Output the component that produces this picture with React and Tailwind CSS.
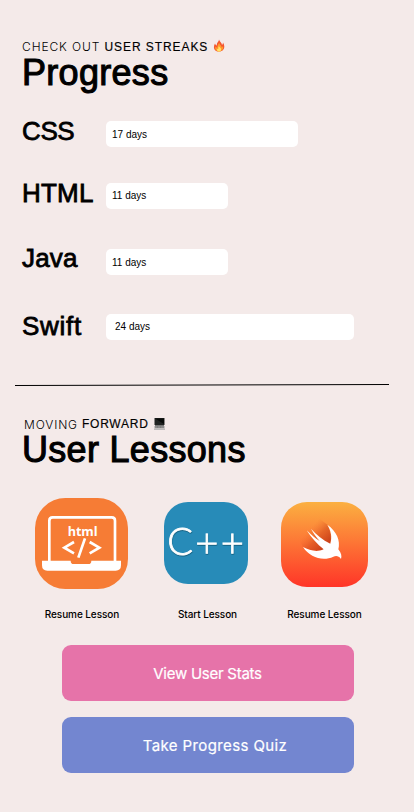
const helvetica = "font-['Liberation_Sans',Arial,sans-serif]";
const inter = "font-['Inter',sans-serif]";

const streaks = [
  { name: 'CSS', days: '17 days', row: 'h-[62px]', label: 'tracking-[-0.4px]', bar: 'w-[192px] pl-1.5 pt-px' },
  { name: 'HTML', days: '11 days', row: 'h-[66px]', label: 'tracking-[0.2px]', bar: 'w-[122px] pl-1.5 pb-0.5' },
  { name: 'Java', days: '11 days', row: 'h-[65px]', label: '-mt-px tracking-[0.2px]', bar: 'w-[122px] pl-1.5 pt-px' },
  { name: 'Swift', days: '24 days', row: 'h-[70px]', label: 'mt-0.5 tracking-[0.7px]', bar: 'w-[248px] pl-[9px] pb-px' },
];

function Flame() {
  return (
    <svg className="-mt-[3px] h-[13px] w-3" viewBox="0 0 24 26">
      <path d="M12 1C13 6 18 7 18 12Q20 10 20 7C25 14 23 25 12 25S0 15 4 9Q5 13 8 13C6 8 12 6 12 1Z" fill="#f4562e" />
      <path d="M12 7C13 12 18 13 17 17Q19 16 20 14C22 20 17 25 12 25S3 20 5 15Q7 18 9 17C8 12 12 11 12 7Z" fill="#ff9d2e" />
      <path d="M12 14C12 17 17 18 16 21C16 27 7 26 8 20Q10 21 11 19C10 17 11 15 12 14Z" fill="#ffe36b" />
    </svg>
  );
}

function Computer() {
  return (
    <svg className="-mt-0.5 h-3 w-[11px]" viewBox="0 0 22 24">
      <rect x="1" y="0" width="20" height="14" fill="#202322" />
      <path d="M2 1H20V12Z" fill="#080c0a" />
      <rect x="2" y="14" width="18" height="2" fill="#777" />
      <rect x="1" y="16" width="20" height="5" fill="#9b9b9b" />
      <path d="M3 17H19M3 19H19" stroke="#626262" strokeDasharray="2 1" />
      <rect x="0" y="21" width="22" height="3" fill="#bdbbbb" />
    </svg>
  );
}

function HtmlLogo() {
  return (
    <svg className="h-[91px] w-[93px]" viewBox="30 24 279 273">
      <rect x="30" y="24" width="279" height="273" rx="91" fill="#f67c35" />
      <path d="M73 213V92Q73 82 83 82H260Q270 82 270 92V213" fill="none" stroke="#fff" strokeWidth="8" />
      <path d="M51 212H137Q137 222 146 222H190Q199 222 199 212H288V226Q288 242 272 242H67Q51 242 51 226Z" fill="#fff" />
      <text x="173" y="137" textAnchor="middle" textLength="89" fill="#fff" className="font-['Open_Sans',sans-serif] text-[38px] font-bold">html</text>
      <path d="M147 156L118 173L147 190M194 156L223 173L194 190M180 145L160 203" fill="none" stroke="#fff" strokeWidth="8" />
    </svg>
  );
}

function CppLogo() {
  return (
    <svg className="h-[82px] w-[84px]" viewBox="27 36 252 246">
      <rect x="27" y="36" width="252" height="246" rx="72" fill="#278bb8" />
      <g className="font-['Lato',sans-serif] font-light [filter:drop-shadow(1px_3px_1px_#176384)]" fill="#fff" stroke="#fff" strokeWidth="2.5">
        <text x="37" y="196" className="text-[114px]">C</text>
        <text x="121" y="200" className="text-[120px]">+</text>
        <text x="197" y="200" className="text-[120px]">+</text>
      </g>
    </svg>
  );
}

function SwiftLogo() {
  return (
    <svg className="mt-px h-[85px] w-[87px]" viewBox="33 36 261 255">
      <defs>
        <linearGradient id="sky" x1="0" y1="0" x2="0" y2="1">
          <stop offset="0" stopColor="#fbb041" />
          <stop offset="1" stopColor="#ff3528" />
        </linearGradient>
        <linearGradient id="wing" gradientUnits="userSpaceOnUse" x1="172" y1="160" x2="122" y2="114">
          <stop offset="0" stopColor="#c23a15" stopOpacity=".85" />
          <stop offset=".5" stopColor="#d34b1b" stopOpacity=".55" />
          <stop offset="1" stopColor="#f16a2e" stopOpacity="0" />
        </linearGradient>
      </defs>
      <rect x="33" y="36" width="261" height="255" rx="78" fill="url(#sky)" />
      <path d="M99 171L85 145L143 82L172 104Q187 130 181 161L161 179Q130 188 99 171Z" fill="url(#wing)" />
      <path d="M172 104C200 124 212 152 205 178C214 189 216 199 213 207C206 197 198 197 190 200C160 214 120 204 99 171C118 182 142 187 161 178C142 163 123 143 110 121C124 135 137 146 149 153C138 141 130 129 123 116C138 133 158 150 181 161C187 141 183 121 172 104Z" fill="#fff" />
    </svg>
  );
}

function SectionTitle({ children }) {
  return (
    <h1 className={`h-[38px] whitespace-nowrap pl-[22px] text-[36px] leading-[38px] tracking-[0.3px] [-webkit-text-stroke:1.1px_black] ${helvetica}`}>{children}</h1>
  );
}

function Lesson({ logo, label, width, shift = '' }) {
  return (
    <div className={`flex flex-col items-center ${width}`}>
      <div className="flex h-[91px] items-center">{logo}</div>
      <p className={`mt-[18px] whitespace-nowrap text-[10px] font-medium leading-[14px] tracking-[-0.08px] ${shift} ${inter}`}>{label}</p>
    </div>
  );
}

export default function App() {
  return (
    <main className="h-[812px] w-[414px] overflow-hidden bg-[#f4eae9] pt-10 text-black">
      <div className="flex h-[14px] items-center pl-[22px] text-xs leading-[14px]">
        <span className={`w-[82.5px] whitespace-nowrap font-light tracking-[0.9px] ${inter}`}>CHECK OUT</span>
        <span className={`w-[108.5px] whitespace-nowrap tracking-[0.92px] [-webkit-text-stroke:0.15px_black] ${helvetica}`}>USER STREAKS</span>
        <Flame />
      </div>
      <SectionTitle>Progress</SectionTitle>

      <section className={`mt-[29px] pl-[22px] ${helvetica}`}>
        {streaks.map((s) => (
          <div key={s.name} className={`flex items-start ${s.row}`}>
            <h2 className={`w-[84px] text-[26px] leading-[20px] [-webkit-text-stroke:0.8px_black] ${s.label}`}>{s.name}</h2>
            <div className={`flex h-[26px] items-center rounded-[5px] bg-white text-[10px] ${s.bar}`}>{s.days}</div>
          </div>
        ))}
      </section>

      <svg className="block h-[3px] w-[414px]" viewBox="0 0 414 3">
        <path d="M15 1.5L389 0.5" stroke="#000" />
      </svg>

      <div className="mt-[31px] flex h-[13px] items-center pl-6 text-xs leading-[13px]">
        <span className={`w-[58px] whitespace-nowrap font-light tracking-[0.85px] ${inter}`}>MOVING</span>
        <span className={`w-[72px] whitespace-nowrap tracking-[0.75px] [-webkit-text-stroke:0.15px_black] ${helvetica}`}>FORWARD</span>
        <Computer />
      </div>
      <SectionTitle>User Lessons</SectionTitle>

      <section className="mt-[29px] flex pl-[35px]">
        <Lesson logo={<HtmlLogo />} label="Resume Lesson" width="w-[93px]" shift="pl-px" />
        <Lesson logo={<CppLogo />} label="Start Lesson" width="ml-9 w-[84px] [&>div]:pb-px" shift="pl-[3px]" />
        <Lesson logo={<SwiftLogo />} label="Resume Lesson" width="ml-[33px] w-[87px]" />
      </section>

      <div className={`mt-6 flex flex-col items-center gap-4 pl-0.5 text-white ${inter}`}>
        <button className="h-14 w-[292px] rounded-[9px] bg-[#e673a9] pr-px pt-0.5 text-[15px] tracking-[-0.25px] [-webkit-text-stroke:0.2px_white]">View User Stats</button>
        <button className="h-14 w-[292px] rounded-[9px] bg-[#7386d0] pl-[14px] pt-0.5 text-[15px] tracking-[0.38px] [-webkit-text-stroke:0.2px_white]">Take Progress Quiz</button>
      </div>
    </main>
  );
}
